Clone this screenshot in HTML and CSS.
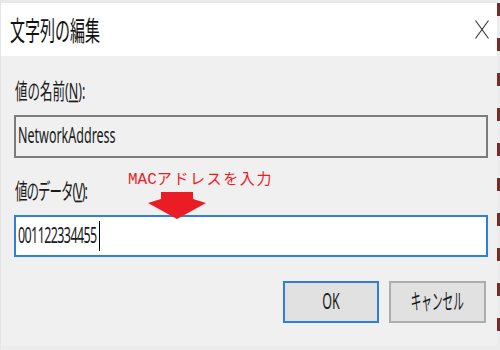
FILE: index.html
```html
<!doctype html>
<html lang="ja">
  <head>
    <meta charset="UTF-8" />
    <meta name="viewport" content="width=device-width, initial-scale=1.0" />
    <title>文字列の編集</title>
    <link rel="stylesheet" href="styles.css">
  </head>
  <body>
    <div class="screen">
      <div class="dialog">
        <div class="backdrop_top"></div>
        <div class="titlebar">
          <span class="title_text tall">文字列の編集</span>
          <svg class="close_icon" width="14" height="19" viewBox="0 0 14 19">
            <line x1="0.5" y1="0.5" x2="13.5" y2="18.5" />
            <line x1="13.5" y1="0.5" x2="0.5" y2="18.5" />
          </svg>
        </div>
        <div class="content">
          <div class="label_row">
            <span class="tall">値の名前(<u>N</u>):</span>
          </div>
          <div class="field field_readonly">
            <span class="tall">NetworkAddress</span>
          </div>
          <div class="label_row">
            <span class="tall label_tight">値のデータ(<u>V</u>):</span>
          </div>
          <div class="field field_focus">
            <span class="tall digits">001122334455</span>
            <span class="caret"></span>
          </div>
          <div class="button_row">
            <div class="button button_default"><span class="tall">OK</span></div>
            <div class="button"><span class="tall kana_narrow">キャンセル</span></div>
          </div>

          <!-- red annotation pasted over the dialog -->
          <div class="note"><span class="note_latin">MAC</span>アドレスを入力</div>
          <svg class="arrow" width="62" height="30" viewBox="0 0 62 30">
            <polygon points="15,0 47,0 47,7 60,11 31,27 2,11 15,7" />
          </svg>
        </div>
        <div class="backdrop_bottom"></div>
      </div>
      <div class="edge"></div>
    </div>
  </body>
</html>
```

FILE: styles.css
```css
:root {
  --font-ui: "Noto Sans", "Noto Sans CJK JP", sans-serif;
  --face: #f0f0f0;
  --focus-blue: #2f7ed8;
  --note-red: #ec1c24;
}

html {
  font-family: var(--font-ui);
}
body {
  margin: 0;
  background-color: var(--face);
  color: #1a1a1a;
}

.screen {
  display: flex;
  width: 500px;
  height: 350px;
  overflow: hidden;
}

.dialog {
  width: 497px;
  display: flex;
  flex-direction: column;
  background-color: var(--face);
  border-left: 1px solid #e4e4e4;
  box-sizing: border-box;
}
.backdrop_top {
  height: 3px;
  background-color: #e9e9e9;
}
.backdrop_bottom {
  height: 4px;
  background-color: #ececec;
}

/* the whole screenshot was stretched vertically, so text is too */
.tall {
  display: inline-block;
  line-height: 1;
  transform: scaleY(1.75);
  white-space: nowrap;
}
.tall u {
  text-underline-offset: 1px;
}

/*TITLE*/
.titlebar {
  height: 53px;
  display: flex;
  align-items: center;
  justify-content: space-between;
  padding: 0 8px 0 9px;
  background-color: #ffffff;
}
.title_text {
  font-family: "Noto Sans CJK JP", sans-serif;
  font-size: 15px;
  color: #111;
  transform: scaleY(1.8);
}
.close_icon line {
  stroke: #333;
  stroke-width: 1.1;
}

/*BODY*/
.content {
  flex: 1;
  position: relative;
  display: flex;
  flex-direction: column;
  padding: 0 9px 0 13px;
}
.label_row {
  height: 24px;
  display: flex;
  align-items: center;
  margin-top: 24px;
  margin-bottom: 11px;
  padding-left: 1px;
  font-size: 12.5px;
}
.label_row + .field + .label_row {
  margin-top: 22px;
}
.label_tight {
  letter-spacing: -1px;
}

.field {
  height: 43px;
  display: flex;
  align-items: center;
  padding-left: 2px;
  border: 2px solid #7c7c7c;
  box-sizing: border-box;
  font-size: 12.5px;
}
.field_readonly {
  background-color: var(--face);
}
.field_focus {
  height: 42px;
  border-color: var(--focus-blue);
  background-color: #ffffff;
}
.digits {
  letter-spacing: -0.6px;
}
.caret {
  width: 1px;
  height: 30px;
  margin-left: 2px;
  background-color: #000;
}

.button_row {
  display: flex;
  justify-content: flex-end;
  gap: 10px;
  margin-top: 24px;
  padding-right: 2px;
}
.button {
  width: 97px;
  height: 42px;
  display: flex;
  align-items: center;
  justify-content: center;
  border: 2px solid #adadad;
  box-sizing: border-box;
  background-color: #e1e1e1;
  font-size: 12.5px;
}
.button_default {
  width: 96px;
  border-color: var(--focus-blue);
}
.kana_narrow {
  transform: scale(0.85, 1.75);
}

/*ANNOTATION*/
.note {
  position: absolute;
  left: 127px;
  top: 114px;
  font-family: "Noto Sans CJK JP", sans-serif;
  font-size: 15px;
  line-height: 1;
  letter-spacing: 1.6px;
  color: var(--note-red);
  white-space: nowrap;
}
.note_latin {
  font-family: "Liberation Mono", monospace;
  font-size: 16px;
  letter-spacing: 0;
}
.arrow {
  position: absolute;
  left: 145px;
  top: 136px;
}
.arrow polygon {
  fill: var(--note-red);
}

/* strip of the window behind, at the right edge */
.edge {
  width: 3px;
  background: repeating-linear-gradient(
    to bottom,
    #ececec 0 3px,
    #7b2a2c 3px 16px,
    #ececec 16px 35px
  );
}
```
